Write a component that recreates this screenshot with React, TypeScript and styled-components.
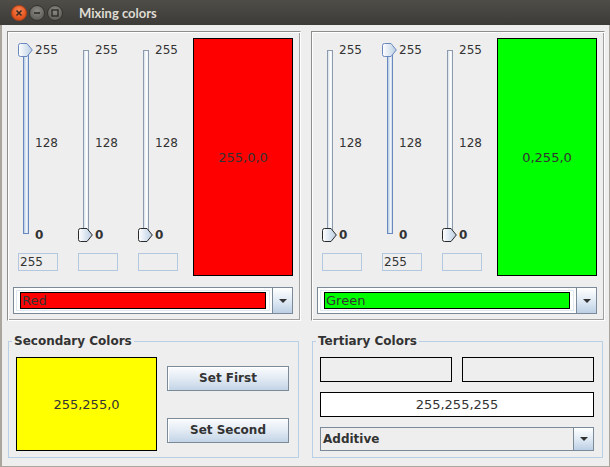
import React, { useId } from "react";
import styled, { createGlobalStyle } from "styled-components";

type Mixer = {
  values: number[];
  name: string;
  color: string;
};

const mixers: Mixer[] = [
  { values: [255, 0, 0], name: "Red", color: "#ff0000" },
  { values: [0, 255, 0], name: "Green", color: "#00ff00" },
];

const GlobalStyle = createGlobalStyle`
  html, body {
    margin: 0;
    padding: 0;
    background: #3c3b37;
  }
  body {
    width: 610px;
    height: 467px;
    overflow: hidden;
  }
`;

const Window = styled.div`
  width: 610px;
  height: 467px;
  display: flex;
  flex-direction: column;
  font-family: "DejaVu Sans", Verdana, sans-serif;
  font-size: 12px;
  color: #333333;
`;

const TitleBar = styled.div`
  flex: none;
  height: 25px;
  display: flex;
  align-items: center;
  gap: 2px;
  padding-left: 11px;
  background: linear-gradient(#4e4d48, #3c3b37);
`;

const WinButton = styled.div<{ $close?: boolean }>`
  width: 16px;
  height: 16px;
  border-radius: 50%;
  display: flex;
  align-items: center;
  justify-content: center;
  box-sizing: border-box;
  border: 1px solid ${(p) => (p.$close ? "#b4411a" : "#35342f")};
  background: ${(p) =>
    p.$close
      ? "radial-gradient(circle at 50% 35%, #f58a5a, #e5561f 60%, #c8461a)"
      : "radial-gradient(circle at 50% 35%, #8c8a84, #67655f 65%, #55534e)"};
`;

const Title = styled.div`
  margin-left: 14px;
  font-family: Lato, "DejaVu Sans", sans-serif;
  font-weight: bold;
  font-size: 13px;
  color: #dfdbd2;
`;

const Body = styled.div`
  flex: 1;
  background: #eeeeee;
  border-left: 2px solid #aaa59d;
  border-right: 1px solid #aaa59d;
  border-bottom: 1px solid #aaa59d;
  padding: 6px 4px 0 5px;
`;

const TopRow = styled.div`
  display: grid;
  grid-template-columns: 294px 294px;
  gap: 10px;
`;

const EtchedPanel = styled.div`
  height: 290px;
  box-sizing: border-box;
  border: 1px solid;
  border-color: #8e8e8e #ffffff #ffffff #8e8e8e;
  box-shadow: inset 1px 1px 0 #ffffff, inset -1px -1px 0 #a0a0a0;
  padding: 6px 5px 5px 5px;
  display: flex;
  flex-direction: column;
`;

const MixRow = styled.div`
  display: flex;
  height: 238px;
`;

const SliderCol = styled.div`
  width: 60px;
  display: flex;
  flex-direction: column;
`;

const SliderArea = styled.div`
  height: 206px;
  margin-bottom: 9px;
  display: flex;
`;

const TrackBox = styled.div`
  width: 22px;
  padding: 12px 0 0 10px;
  box-sizing: border-box;
`;

const Track = styled.div`
  position: relative;
  width: 6px;
  height: 184px;
  box-sizing: border-box;
  border: 1px solid #8c9bad;
  background: linear-gradient(90deg, #d6e0ea, #ffffff 60%, #e6edf4);
`;

const TrackFill = styled.div`
  position: absolute;
  left: -1px;
  right: -1px;
  bottom: -1px;
  box-sizing: border-box;
  border: 1px solid #6a88c0;
  background: linear-gradient(90deg, #b4cae3, #f2f6fb 60%, #c9d9ea);
`;

const Thumb = styled.svg`
  position: absolute;
  left: -6px;
  width: 15px;
  height: 14px;
`;

const Labels = styled.div`
  flex: 1;
  display: flex;
  flex-direction: column;
  justify-content: space-between;
  padding: 5px 0 2px;
`;

const TickLabel = styled.span<{ $bold?: boolean }>`
  line-height: 14px;
  font-weight: ${(p) => (p.$bold ? "bold" : "normal")};
`;

const ValueField = styled.div`
  width: 40px;
  height: 18px;
  margin-left: 5px;
  box-sizing: border-box;
  border: 1px solid #b3c8de;
  padding-left: 1px;
  line-height: 16px;
`;

const Swatch = styled.div<{ $bg: string }>`
  width: 100px;
  height: 238px;
  box-sizing: border-box;
  border: 1px solid #000000;
  background: ${(p) => p.$bg};
  display: flex;
  align-items: center;
  justify-content: center;
  font-size: 13px;
`;

const Combo = styled.div<{ $height: number; $bg: string }>`
  display: flex;
  height: ${(p) => p.$height}px;
  box-sizing: border-box;
  border: 1px solid #7a8a99;
  background: ${(p) => p.$bg};
`;

const TopCombo = styled(Combo)`
  width: 280px;
  margin-top: 11px;
`;

const ComboValue = styled.div`
  flex: 1;
  display: flex;
  padding: 4px 6px 4px 6px;
  box-shadow: inset 0 0 0 2px #ffffff, inset 0 0 0 3px #dfe7f0;
`;

const ColorChip = styled.div<{ $bg: string }>`
  flex: 1;
  box-sizing: border-box;
  border: 1px solid #000000;
  background: ${(p) => p.$bg};
  padding-left: 1px;
  line-height: 15px;
  font-size: 13px;
`;

const PlainValue = styled.div`
  flex: 1;
  padding-left: 2px;
  font-weight: bold;
  line-height: 22px;
`;

const ArrowButton = styled.div`
  width: 19px;
  flex: none;
  border-left: 1px solid #7a8a99;
  background: linear-gradient(#ffffff, #dde8f3 55%, #bccfe4);
  display: flex;
  align-items: center;
  justify-content: center;
  &::after {
    content: "";
    border-left: 4px solid transparent;
    border-right: 4px solid transparent;
    border-top: 4px solid #333333;
  }
`;

const BottomRow = styled.div`
  display: grid;
  grid-template-columns: 291px 291px;
  gap: 13px;
  margin: 13px 0 0 1px;
`;

const Group = styled.fieldset`
  margin: 0;
  min-width: 0;
  border: 1px solid #b8cfe5;
  padding: 9px 8px 6px 7px;
`;

const GroupTitle = styled.legend`
  margin-left: -4px;
  padding: 0 2px;
  line-height: 14px;
  font-weight: bold;
  color: #333333;
`;

const SecondaryBody = styled.div`
  display: flex;
  gap: 10px;
`;

const MixBox = styled.div<{ $bg: string; $height: number }>`
  height: ${(p) => p.$height}px;
  box-sizing: border-box;
  border: 1px solid #000000;
  background: ${(p) => p.$bg};
  display: flex;
  align-items: center;
  justify-content: center;
  font-size: 13px;
`;

const ButtonColumn = styled.div`
  display: flex;
  flex-direction: column;
  justify-content: center;
  gap: 27px;
`;

const Button = styled.button`
  width: 122px;
  height: 25px;
  padding: 0;
  border: 1px solid #7a8a99;
  box-shadow: inset 1px 1px 0 #ffffff;
  background: linear-gradient(#fbfcfe, #e2eaf3 50%, #c3d4e7);
  font-family: "DejaVu Sans", Verdana, sans-serif;
  font-size: 12px;
  font-weight: bold;
  color: #333333;
`;

const TertiaryBody = styled.div`
  display: grid;
  grid-template-columns: 1fr 1fr;
  gap: 10px;
  & > :nth-child(n + 3) {
    grid-column: 1 / -1;
  }
`;

const ThumbIcon = ({ top, active }: { top: number; active: boolean }) => {
  const id = useId();
  return (
    <Thumb viewBox="0 0 15 14" style={{ top }}>
      <defs>
        <linearGradient id={id} x1="0" y1="0" x2="1" y2="0">
          <stop offset="0" stopColor="#ffffff" />
          <stop offset="1" stopColor="#b9cde3" />
        </linearGradient>
      </defs>
      <path
        d="M2.5 0.5 H9 L14.3 7 L9 13.5 H2.5 Q0.5 13.5 0.5 11.5 V2.5 Q0.5 0.5 2.5 0.5 Z"
        fill={`url(#${id})`}
        stroke={active ? "#6a88c0" : "#2b2b2b"}
      />
    </Thumb>
  );
};

const Slider = ({ value }: { value: number }) => {
  const ratio = value / 255;
  return (
    <SliderCol>
      <SliderArea>
        <TrackBox>
          <Track>
            {value > 0 && (
              <TrackFill style={{ height: `calc(${ratio * 100}% + 2px)` }} />
            )}
            <ThumbIcon top={-8 + (1 - ratio) * 185} active={value > 0} />
          </Track>
        </TrackBox>
        <Labels>
          <TickLabel>255</TickLabel>
          <TickLabel>128</TickLabel>
          <TickLabel $bold>0</TickLabel>
        </Labels>
      </SliderArea>
      <ValueField>{value > 0 ? value : ""}</ValueField>
    </SliderCol>
  );
};

const MixerPanel = ({ mixer }: { mixer: Mixer }) => (
  <EtchedPanel>
    <MixRow>
      {mixer.values.map((v, i) => (
        <Slider key={i} value={v} />
      ))}
      <Swatch $bg={mixer.color}>{mixer.values.join(",")}</Swatch>
    </MixRow>
    <TopCombo $height={27} $bg="#ffffff">
      <ComboValue>
        <ColorChip $bg={mixer.color}>{mixer.name}</ColorChip>
      </ComboValue>
      <ArrowButton />
    </TopCombo>
  </EtchedPanel>
);

const CloseGlyph = () => (
  <svg width="8" height="8" viewBox="0 0 8 8">
    <path d="M1.5 1.5 L6.5 6.5 M6.5 1.5 L1.5 6.5" stroke="#3a2a22" strokeWidth="1.6" />
  </svg>
);

const MinGlyph = () => (
  <svg width="8" height="8" viewBox="0 0 8 8">
    <path d="M1 4 H7" stroke="#2e2d29" strokeWidth="1.6" />
  </svg>
);

const MaxGlyph = () => (
  <svg width="8" height="8" viewBox="0 0 8 8">
    <rect x="1" y="1" width="6" height="6" fill="none" stroke="#2e2d29" strokeWidth="1.4" />
  </svg>
);

export default function App() {
  return (
    <>
      <GlobalStyle />
      <Window>
        <TitleBar>
          <WinButton $close>
            <CloseGlyph />
          </WinButton>
          <WinButton>
            <MinGlyph />
          </WinButton>
          <WinButton>
            <MaxGlyph />
          </WinButton>
          <Title>Mixing colors</Title>
        </TitleBar>
        <Body>
          <TopRow>
            {mixers.map((m) => (
              <MixerPanel key={m.name} mixer={m} />
            ))}
          </TopRow>
          <BottomRow>
            <Group>
              <GroupTitle>Secondary Colors</GroupTitle>
              <SecondaryBody>
                <MixBox $bg="#ffff00" $height={94} style={{ width: 141 }}>
                  255,255,0
                </MixBox>
                <ButtonColumn>
                  <Button>Set First</Button>
                  <Button>Set Second</Button>
                </ButtonColumn>
              </SecondaryBody>
            </Group>
            <Group>
              <GroupTitle>Tertiary Colors</GroupTitle>
              <TertiaryBody>
                <MixBox $bg="transparent" $height={25} />
                <MixBox $bg="transparent" $height={25} />
                <MixBox $bg="#ffffff" $height={25}>
                  255,255,255
                </MixBox>
                <Combo $height={24} $bg="#eeeeee">
                  <PlainValue>Additive</PlainValue>
                  <ArrowButton />
                </Combo>
              </TertiaryBody>
            </Group>
          </BottomRow>
        </Body>
      </Window>
    </>
  );
}
